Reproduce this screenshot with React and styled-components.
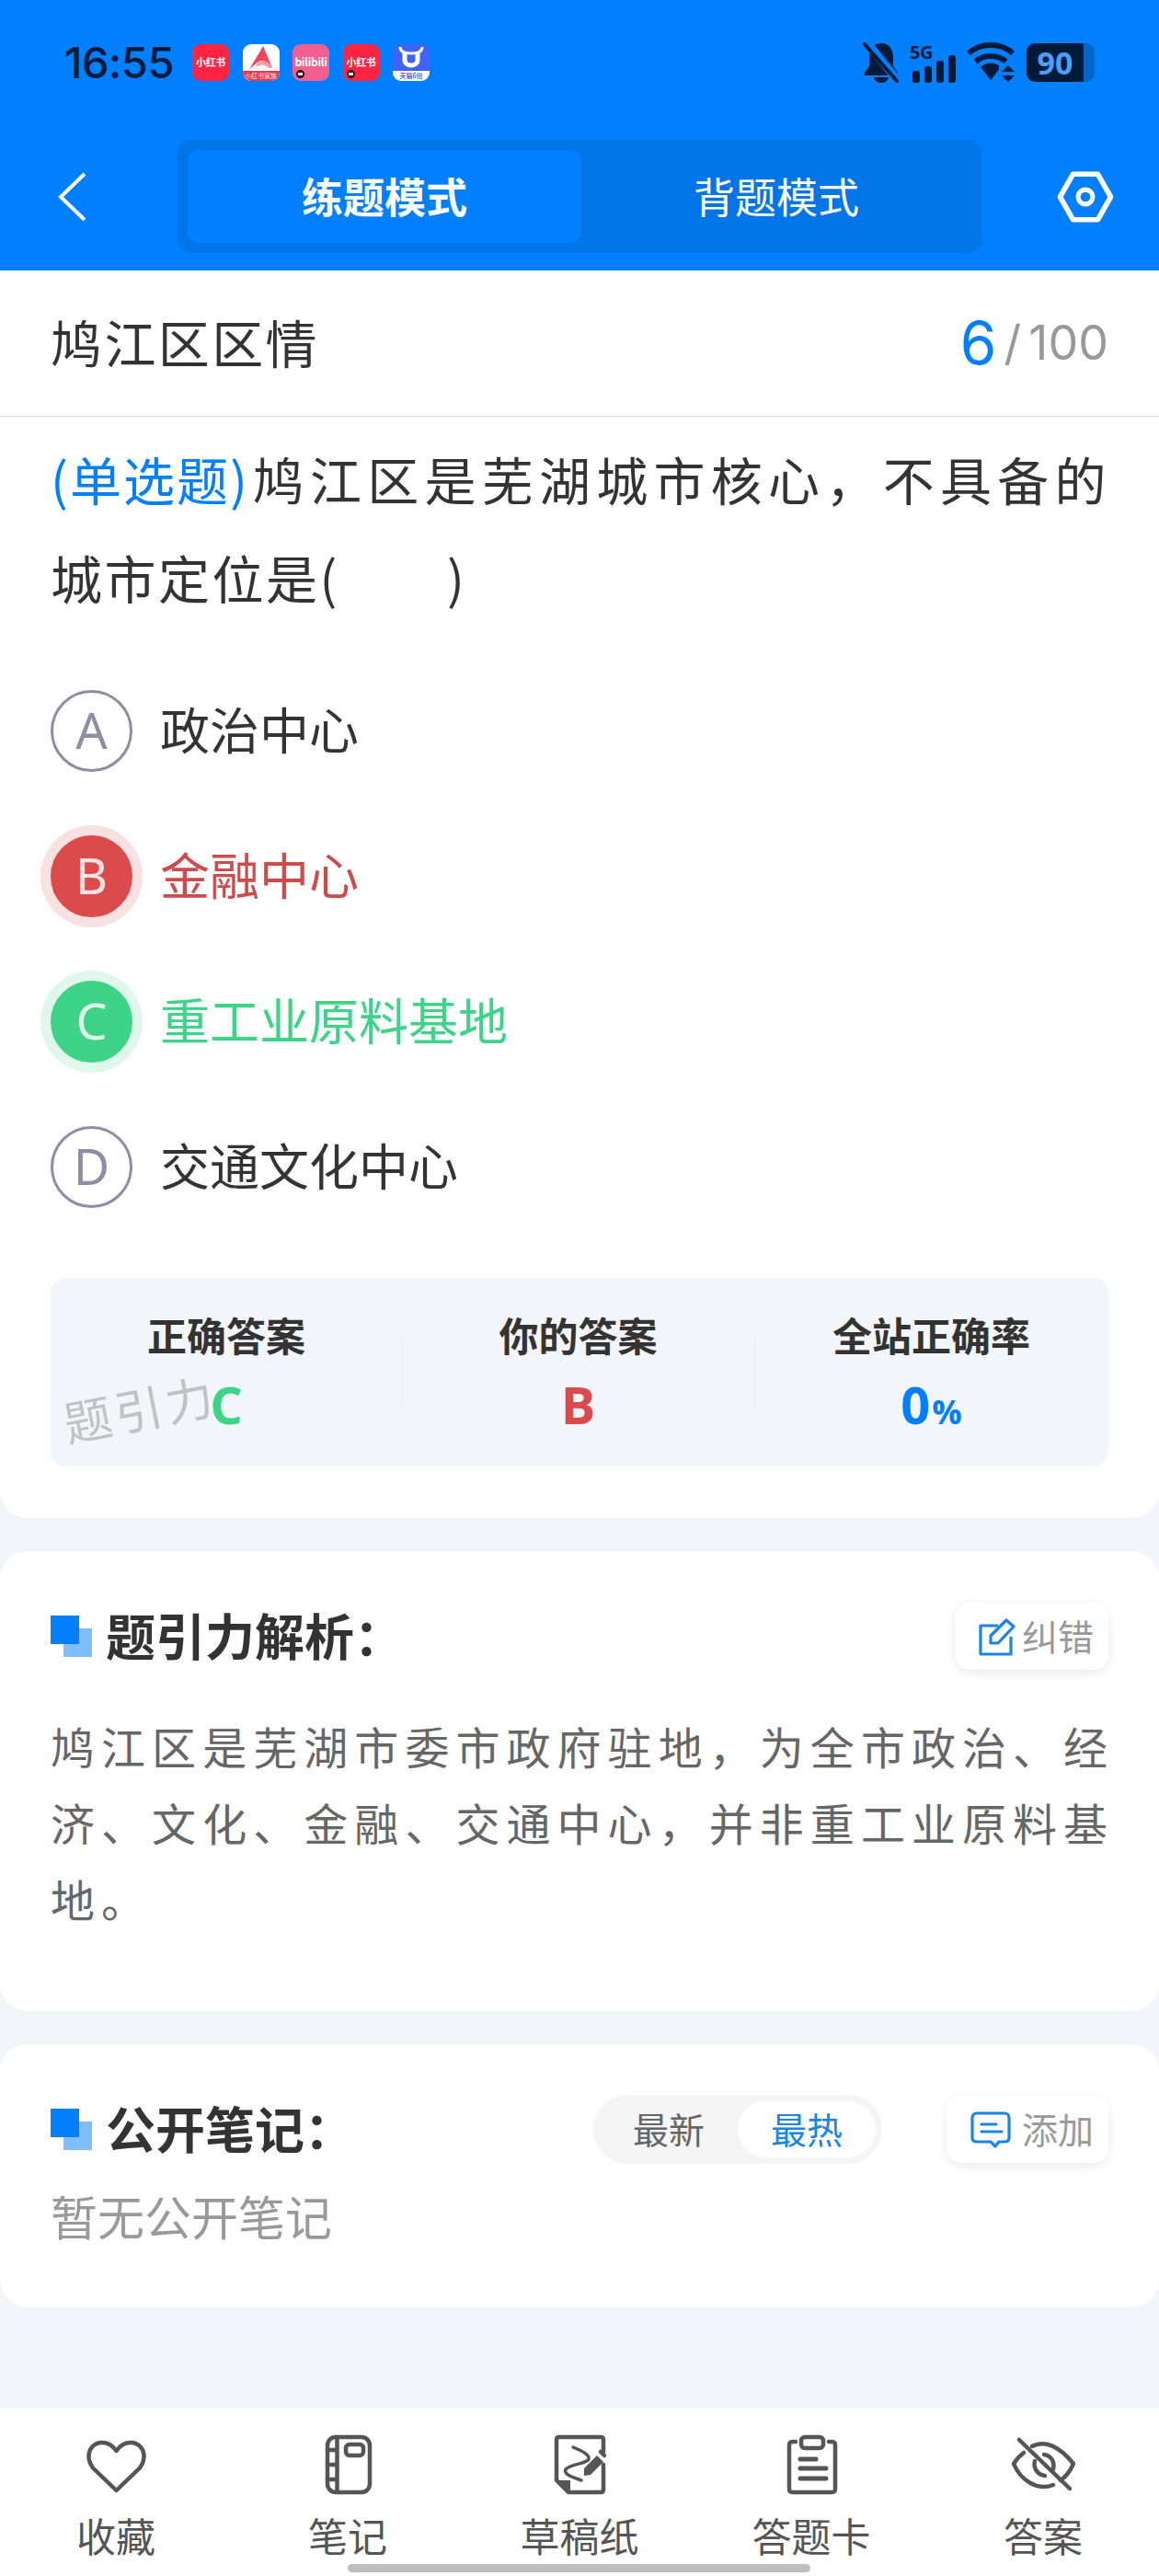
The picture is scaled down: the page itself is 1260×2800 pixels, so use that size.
import React from 'react';
import styled, { createGlobalStyle } from 'styled-components';

const BLUE = '#0080ff';
const INK = '#001a3a';
const GREEN = '#3dd488';
const RED = '#dc4b4b';
const CJK = '"Noto Sans CJK SC", "Noto Sans", sans-serif';

const GlobalStyle = createGlobalStyle`
  html, body { margin: 0; padding: 0; background: #f2f5f9; }
  body { font-family: ${CJK}; color: #333; }
  * { box-sizing: border-box; }
`;

const Page = styled.div`
  position: relative;
  width: 1260px;
  height: 2800px;
  display: flex;
  flex-direction: column;
  overflow: hidden;
`;

/* header */
const Header = styled.header`
  background: ${BLUE};
  height: 294px;
  padding-top: 47px;
`;

const StatusBar = styled.div`
  height: 42px;
  display: flex;
  align-items: center;
  padding: 0 70px;
`;

const Clock = styled.span`
  font-family: Inter, Roboto, sans-serif;
  font-size: 47px;
  font-weight: 500;
  line-height: 42px;
  color: ${INK};
  letter-spacing: -0.5px;
  width: 139px;
`;

const AppTiles = styled.div`
  display: flex;
  gap: 14.5px;
`;

const AppTile = styled.div`
  position: relative;
  width: 40px;
  height: 40px;
  border-radius: 9px;
  overflow: hidden;
  background: ${(p) => p.$bg};
  color: #fff;
  font-size: ${(p) => p.$size || 11}px;
  font-weight: 700;
  line-height: 38px;
  text-align: center;
  white-space: nowrap;
  letter-spacing: -0.3px;
`;

const TileBand = styled.div`
  position: absolute;
  left: 0;
  right: 0;
  bottom: 0;
  height: 11px;
  background: ${(p) => p.$bg};
  color: ${(p) => p.$color};
  font-size: 7px;
  font-weight: 500;
  line-height: 11px;
  letter-spacing: 0;
`;

const TileDot = styled.span`
  position: absolute;
  left: 4px;
  bottom: 3px;
  width: 9px;
  height: 9px;
  border-radius: 50%;
  background: #2a0a14;
  border: 2px solid #2a0a14;
  &::after {
    content: '';
    display: block;
    width: 5px;
    height: 3px;
    margin-top: 1px;
    background: #fff;
  }
`;

const StatusIcons = styled.div`
  margin-left: auto;
  display: flex;
  align-items: center;
`;

const Battery = styled.div`
  display: flex;
  align-items: center;
  margin-left: 11px;
`;

const BatteryBody = styled.div`
  width: 62px;
  height: 42px;
  background: ${INK};
  border-radius: 9px 0 0 9px;
  color: #4a9fff;
  font-family: "Open Sans", sans-serif;
  font-size: 34px;
  font-weight: 700;
  line-height: 42px;
  text-align: center;
`;

const BatteryTip = styled.div`
  width: 12px;
  height: 42px;
  background: #0064c8;
  border-radius: 0 9px 9px 0;
`;

const Nav = styled.nav`
  margin-top: 63px;
  display: grid;
  grid-template-columns: 193px 874px 1fr;
  align-items: center;
`;

const BackButton = styled.div`
  padding-left: 62px;
  display: flex;
`;

const ModeSwitch = styled.div`
  height: 123px;
  padding: 11px;
  border-radius: 15px;
  background: #0075e8;
  display: flex;
`;

const Mode = styled.div`
  flex: ${(p) => (p.$active ? '0 0 428px' : '1')};
  border-radius: 12px;
  background: ${(p) => (p.$active ? BLUE : 'transparent')};
  color: #fff;
  font-size: 45px;
  font-weight: ${(p) => (p.$active ? 700 : 400)};
  line-height: 99px;
  text-align: center;
`;

const GearButton = styled.div`
  display: flex;
  justify-content: flex-end;
  padding-right: 49px;
`;

/* question card */
const QuestionCard = styled.section`
  background: #fff;
  border-radius: 0 0 30px 30px;
  padding-bottom: 56px;
`;

const TitleRow = styled.div`
  height: 159px;
  padding: 0 55px;
  border-bottom: 1px solid #dcdcdc;
  display: flex;
  align-items: center;
  justify-content: space-between;
`;

const Title = styled.h1`
  margin: 0 0 6px;
  font-size: 56px;
  font-weight: 400;
  letter-spacing: 2.4px;
  color: #333;
`;

const Progress = styled.div`
  display: flex;
  align-items: center;
  font-family: Inter, "Noto Sans", sans-serif;
  color: #999;
  font-size: 52px;
  line-height: 70px;
`;

const ProgressNow = styled.span`
  color: ${BLUE};
  font-size: 64px;
  margin-right: 8px;
`;

const ProgressSlash = styled.span`
  margin-right: 8px;
`;

const QuestionText = styled.div`
  margin: 13px 55px 0;
  font-size: 56px;
  line-height: 107px;
  letter-spacing: 2.5px;
  color: #333;
`;

/* first line is stretched edge to edge, as the app justifies it */
const QuestionLine = styled.div`
  text-align: justify;
  text-align-last: ${(p) => (p.$fill ? 'justify' : 'left')};
  white-space: nowrap;
`;

const QuestionKind = styled.span`
  display: inline-block;
  color: ${BLUE};
  letter-spacing: 2px;
`;

const Options = styled.div`
  margin-top: 35px;
`;

const tones = {
  idle: { text: '#333', fill: 'transparent', ring: 'transparent', letter: '#8a8fa3', border: '#8a8fa3' },
  wrong: { text: '#cf4a4a', fill: RED, ring: '#f9e1e1', letter: '#fde3e3', border: RED },
  right: { text: GREEN, fill: GREEN, ring: '#e0f7ec', letter: '#dcf8e9', border: GREEN },
};

const Option = styled.div`
  height: 158px;
  padding: 0 55px;
  display: flex;
  align-items: center;
  gap: 30px;
  font-size: 54px;
  color: ${(p) => tones[p.$tone].text};
`;

const OptionText = styled.span`
  margin-bottom: 5px;
`;

const OptionBadge = styled.span`
  flex: none;
  width: 89px;
  height: 89px;
  border-radius: 50%;
  border: 3px solid ${(p) => tones[p.$tone].border};
  background: ${(p) => tones[p.$tone].fill};
  box-shadow: 0 0 0 11px ${(p) => tones[p.$tone].ring};
  color: ${(p) => tones[p.$tone].letter};
  font-family: "Noto Sans", sans-serif;
  font-size: 54px;
  font-weight: 400;
  line-height: 81px;
  text-align: center;
`;

const AnswerBox = styled.div`
  position: relative;
  margin: 42px 55px 0;
  height: 205px;
  background: #f2f5f9;
  border-radius: 16px;
  display: grid;
  grid-template-columns: 382px 383px 1fr;
`;

const Stat = styled.div`
  position: relative;
  padding-top: 33px;
  text-align: center;
  & + &::before {
    content: '';
    position: absolute;
    left: 0;
    top: 66px;
    height: 73px;
    width: 1px;
    background: #e6e9ee;
  }
`;

const StatLabel = styled.div`
  font-size: 43px;
  font-weight: 700;
  line-height: 56px;
  color: #333;
`;

const StatValue = styled.div`
  margin-top: 16px;
  font-family: "Open Sans", sans-serif;
  font-size: 56px;
  font-weight: 700;
  line-height: 64px;
  color: ${(p) => p.$color};
`;

const StatUnit = styled.span`
  font-size: 36px;
  margin-left: 2px;
`;

const Watermark = styled.div`
  position: absolute;
  left: 13px;
  top: 111px;
  font-size: 52px;
  font-weight: 400;
  line-height: 60px;
  letter-spacing: 4px;
  color: #c2c2c2;
  transform: rotate(-11deg);
  white-space: nowrap;
`;

/* lower cards */
const Card = styled.section`
  margin-top: 36px;
  background: #fff;
  border-radius: 30px;
  padding: 56px 55px ${(p) => p.$bottom}px;
`;

const CardHead = styled.div`
  height: 73px;
  display: flex;
  align-items: center;
`;

const Mark = styled.svg`
  flex: none;
  width: 45px;
  height: 45px;
  margin-right: 15px;
`;

const CardTitle = styled.h2`
  margin: 0 auto 5px 0;
  font-size: 54px;
  font-weight: 700;
  color: #333;
`;

const ChipButton = styled.div`
  height: 73px;
  padding: 0 16px 0 ${(p) => p.$left}px;
  border-radius: 16px;
  background: #fff;
  box-shadow: 0 3px 12px rgba(0, 0, 0, 0.09);
  display: flex;
  align-items: center;
  gap: ${(p) => p.$gap}px;
  font-size: 39px;
  color: #999;
`;

const ChipLabel = styled.span`
  margin-bottom: 4px;
`;

const BodyText = styled.p`
  margin: 41px -6px 0 0;
  font-size: 48px;
  line-height: 83px;
  letter-spacing: 6.9px;
  text-align: justify;
  color: #666;
`;

const SortSwitch = styled.div`
  width: 314px;
  height: 75px;
  margin-right: 70px;
  padding: 7px;
  border-radius: 38px;
  background: #f5f5f5;
  display: flex;
`;

const SortItem = styled.div`
  flex: 1;
  border-radius: 31px;
  background: ${(p) => (p.$active ? '#fff' : 'transparent')};
  color: ${(p) => (p.$active ? '#1a84e8' : '#666')};
  font-size: 39px;
  line-height: 58px;
  text-align: center;
`;

const EmptyNote = styled.div`
  margin-top: 27px;
  font-size: 51px;
  line-height: 60px;
  color: #999;
`;

/* bottom tabs */
const TabBar = styled.footer`
  margin-top: auto;
  height: 182px;
  background: #fff;
  padding-top: 27px;
  display: grid;
  grid-template-columns: repeat(5, 1fr);
`;

const Tab = styled.div`
  display: flex;
  flex-direction: column;
  align-items: center;
  color: #555;
  font-size: 43px;
  line-height: 46px;
`;

const TabIcon = styled.svg`
  width: 70px;
  height: 70px;
  margin-bottom: 17px;
  fill: none;
  stroke: #555;
  stroke-width: 4.5;
  stroke-linecap: round;
  stroke-linejoin: round;
`;

const HomeBar = styled.div`
  position: absolute;
  left: 378px;
  bottom: 4px;
  width: 503px;
  height: 9px;
  border-radius: 5px;
  background: #bebebe;
`;

const BackIcon = () => (
  <svg width="34" height="56" viewBox="0 0 34 56" fill="none" stroke="#fff" strokeWidth="4">
    <path d="M30 3 L4 28 L30 53" />
  </svg>
);

const GearIcon = () => (
  <svg width="62" height="56" viewBox="0 0 66 60" fill="none" stroke="#fff" strokeWidth="6" strokeLinejoin="round">
    <path d="M3.5 30 L18.5 3.5 H47.5 L62.5 30 L47.5 56.5 H18.5 Z" />
    <circle cx="33" cy="30" r="8.5" strokeWidth="5.5" />
  </svg>
);

const BellOffIcon = () => (
  <svg width="40" height="44" viewBox="0 0 40 44" style={{ marginRight: 11 }}>
    <path fill={INK} d="M20 1 C11 1 7 8 7 16 V26 L2 33 V36 H38 V33 L33 26 V16 C33 8 29 1 20 1 Z" />
    <path fill={INK} d="M12 38 H28 C27 42 24 44 20 44 C16 44 13 42 12 38 Z" />
    <path stroke={BLUE} strokeWidth="9" d="M3 -2 L39 43" />
    <path stroke={INK} strokeWidth="4" strokeLinecap="round" d="M2 2 L37 42" />
  </svg>
);

const SignalIcon = () => (
  <svg width="52" height="44" viewBox="0 0 52 44" style={{ marginRight: 10 }} fill={INK}>
    <text x="0" y="18" fontFamily='"Open Sans", sans-serif' fontSize="20" fontWeight="700" letterSpacing="-0.5">5G</text>
    <rect x="3" y="31" width="8" height="13" rx="3" />
    <rect x="16" y="26" width="8" height="18" rx="3" />
    <rect x="29" y="20" width="8" height="24" rx="3" />
    <rect x="42" y="14" width="8" height="30" rx="3" />
  </svg>
);

const WifiIcon = () => (
  <svg width="54" height="44" viewBox="0 0 54 44" fill="none" stroke={INK} strokeWidth="6">
    <path d="M2 12 C15 0 37 0 50 12" />
    <path d="M9.5 21 C18 13 34 13 42.5 21" />
    <path fill={INK} stroke="none" d="M15 27 C21 21 31 21 37 27 L26 41 Z" />
    <path fill={BLUE} stroke="none" d="M35 23 H54 V44 H35 Z" />
    <path fill={INK} stroke="none" d="M45 25 L52 32 H38 Z M38 36 H52 L45 43 Z" />
  </svg>
);

const ALogo = () => (
  <svg width="40" height="30" viewBox="0 0 40 30" style={{ display: 'block' }}>
    <path fill="#f0455c" d="M22 2 L32 26 C28 24 25 20 22 18 C18 17 13 22 7 28 C12 18 18 10 22 2 Z" />
    <path fill="#f79aa3" d="M16 20 C22 16 28 18 32 26 L28 26 C24 22 20 21 14 25 Z" />
  </svg>
);

const CowLogo = () => (
  <svg width="40" height="30" viewBox="0 0 40 30" style={{ display: 'block' }} fill="none" stroke="#fff">
    <path strokeWidth="5" d="M13 9 V17 C13 25 27 25 27 17 V9" />
    <path strokeWidth="3" d="M8 3 C8 8 12 10 20 10 C28 10 32 8 32 3" />
  </svg>
);

const EditIcon = () => (
  <svg width="42" height="42" viewBox="0 0 42 42" fill="none" stroke="#1a84e8" strokeWidth="3.2" strokeLinejoin="round">
    <path d="M22 9 H3 V40 H36 V21" />
    <path d="M14 28 V20 L31 3 L39 10 L22 28 Z" />
  </svg>
);

const NoteIcon = () => (
  <svg width="44" height="40" viewBox="0 0 44 40" fill="none" stroke="#1a84e8" strokeWidth="3.2" strokeLinejoin="round" strokeLinecap="round">
    <path d="M7 2 H37 C40 2 42 4 42 7 V29 C42 32 40 33 37 33 H31 L27 38 L22 33 H7 C4 33 2 32 2 29 V7 C2 4 4 2 7 2 Z" />
    <path d="M12 14 H28 M12 22 H34" />
  </svg>
);

const MarkIcon = () => (
  <Mark viewBox="0 0 45 45">
    <rect x="14" y="14" width="31" height="31" fill="#80bfff" />
    <rect x="0" y="0" width="31" height="31" fill={BLUE} />
  </Mark>
);

const HeartIcon = () => (
  <TabIcon viewBox="0 0 70 70">
    <path d="M35.5 19 C31 12.5 26 10 20 10 C11 10 5.5 17 5.5 25 C5.5 30 7.5 34 10 37.5 L35.5 62 L61 37.5 C63.5 34 65.5 30 65.5 25 C65.5 17 60 10 51 10 C45 10 40 12.5 35.5 19 Z" />
  </TabIcon>
);

const NotebookIcon = () => (
  <TabIcon viewBox="0 0 70 70">
    <rect x="13" y="4" width="46" height="60" rx="9" />
    <path d="M23.5 4 V64 M13 18 H23.5 M13 34 H23.5 M13 50 H23.5" />
    <rect x="33" y="12" width="19" height="12" rx="4" />
  </TabIcon>
);

const DraftIcon = () => (
  <TabIcon viewBox="0 0 70 70">
    <path d="M61 20 V7 C61 5 60 4 58 4 H13 C11 4 10 5 10 7 V51 L23 64 H58 C60 64 61 63 61 61 V34" />
    <path strokeWidth="3.5" d="M28 15 C38 19 46 23 45 28 C43 33 26 33 20 39 C17 44 26 47 37 51" />
    <path fill="#555" stroke="none" d="M8 51 H25 V66 Z" />
    <path fill="#555" stroke="none" d="M54 24 L61 31 L47 45 L40 46 L40 38 Z" />
    <path d="M58 20 L62 24" />
  </TabIcon>
);

const ClipboardIcon = () => (
  <TabIcon viewBox="0 0 70 70">
    <path d="M18 9 H15 C12 9 11 10 11 13 V60 C11 63 12 64 15 64 H57 C60 64 61 63 61 60 V13 C61 10 60 9 57 9 H54" />
    <rect x="24" y="4" width="24" height="12" rx="4" />
    <path strokeWidth="5" d="M23 28 H40 M23 38 H51 M23 49 H51" />
  </TabIcon>
);

const EyeOffIcon = () => (
  <TabIcon viewBox="0 0 70 70">
    <path d="M9 7 L64 60" />
    <path d="M23 14 C36 7 52 13 68 33 C65 40 60 47 54 51" />
    <path d="M14 21 C10 24 6 28 3 33 C10 50 28 63 46 56" />
    <path d="M36 23 C43 24 48 30 46 39" />
    <path d="M26 30 C24 38 29 45 37 46" />
  </TabIcon>
);

const tabs = [
  { label: '收藏', Icon: HeartIcon },
  { label: '笔记', Icon: NotebookIcon },
  { label: '草稿纸', Icon: DraftIcon },
  { label: '答题卡', Icon: ClipboardIcon },
  { label: '答案', Icon: EyeOffIcon },
];

const options = [
  { key: 'A', text: '政治中心', tone: 'idle' },
  { key: 'B', text: '金融中心', tone: 'wrong' },
  { key: 'C', text: '重工业原料基地', tone: 'right' },
  { key: 'D', text: '交通文化中心', tone: 'idle' },
];

export default function App() {
  return (
    <Page>
      <GlobalStyle />
      <Header>
        <StatusBar>
          <Clock>16:55</Clock>
          <AppTiles>
            <AppTile $bg="#ff2442">小红书</AppTile>
            <AppTile $bg="#fff">
              <ALogo />
              <TileBand $bg="#e8394e" $color="#ffd7dc">小红书家族</TileBand>
            </AppTile>
            <AppTile $bg="#f2608f" $size={12}>
              bilibili
              <TileDot />
            </AppTile>
            <AppTile $bg="#ff2442">
              小红书
              <TileDot />
            </AppTile>
            <AppTile $bg="#3f63f5">
              <CowLogo />
              <TileBand $bg="#fff" $color="#2a4bd0">天猫6倍</TileBand>
            </AppTile>
          </AppTiles>
          <StatusIcons>
            <BellOffIcon />
            <SignalIcon />
            <WifiIcon />
            <Battery>
              <BatteryBody>90</BatteryBody>
              <BatteryTip />
            </Battery>
          </StatusIcons>
        </StatusBar>
        <Nav>
          <BackButton>
            <BackIcon />
          </BackButton>
          <ModeSwitch>
            <Mode $active>练题模式</Mode>
            <Mode>背题模式</Mode>
          </ModeSwitch>
          <GearButton>
            <GearIcon />
          </GearButton>
        </Nav>
      </Header>

      <QuestionCard>
        <TitleRow>
          <Title>鸠江区区情</Title>
          <Progress>
            <ProgressNow>6</ProgressNow>
            <ProgressSlash>/</ProgressSlash>
            100
          </Progress>
        </TitleRow>
        <QuestionText>
          <QuestionLine $fill>
            <QuestionKind>(单选题)</QuestionKind>鸠江区是芜湖城市核心，不具备的
          </QuestionLine>
          <QuestionLine>城市定位是(　　)</QuestionLine>
        </QuestionText>
        <Options>
          {options.map((o) => (
            <Option key={o.key} $tone={o.tone}>
              <OptionBadge $tone={o.tone}>{o.key}</OptionBadge>
              <OptionText>{o.text}</OptionText>
            </Option>
          ))}
        </Options>
        <AnswerBox>
          <Stat>
            <StatLabel>正确答案</StatLabel>
            <StatValue $color={GREEN}>C</StatValue>
          </Stat>
          <Stat>
            <StatLabel>你的答案</StatLabel>
            <StatValue $color={RED}>B</StatValue>
          </Stat>
          <Stat>
            <StatLabel>全站正确率</StatLabel>
            <StatValue $color={BLUE}>
              0<StatUnit>%</StatUnit>
            </StatValue>
          </Stat>
          <Watermark>题引力</Watermark>
        </AnswerBox>
      </QuestionCard>

      <Card $bottom={81}>
        <CardHead>
          <MarkIcon />
          <CardTitle>题引力解析：</CardTitle>
          <ChipButton $left={25} $gap={6}>
            <EditIcon />
            <ChipLabel>纠错</ChipLabel>
          </ChipButton>
        </CardHead>
        <BodyText>鸠江区是芜湖市委市政府驻地，为全市政治、经济、文化、金融、交通中心，并非重工业原料基地。</BodyText>
      </Card>

      <Card $bottom={70}>
        <CardHead>
          <MarkIcon />
          <CardTitle>公开笔记：</CardTitle>
          <SortSwitch>
            <SortItem>最新</SortItem>
            <SortItem $active>最热</SortItem>
          </SortSwitch>
          <ChipButton $left={26} $gap={12}>
            <NoteIcon />
            <ChipLabel>添加</ChipLabel>
          </ChipButton>
        </CardHead>
        <EmptyNote>暂无公开笔记</EmptyNote>
      </Card>

      <TabBar>
        {tabs.map(({ label, Icon }) => (
          <Tab key={label}>
            <Icon />
            {label}
          </Tab>
        ))}
      </TabBar>
      <HomeBar />
    </Page>
  );
}
